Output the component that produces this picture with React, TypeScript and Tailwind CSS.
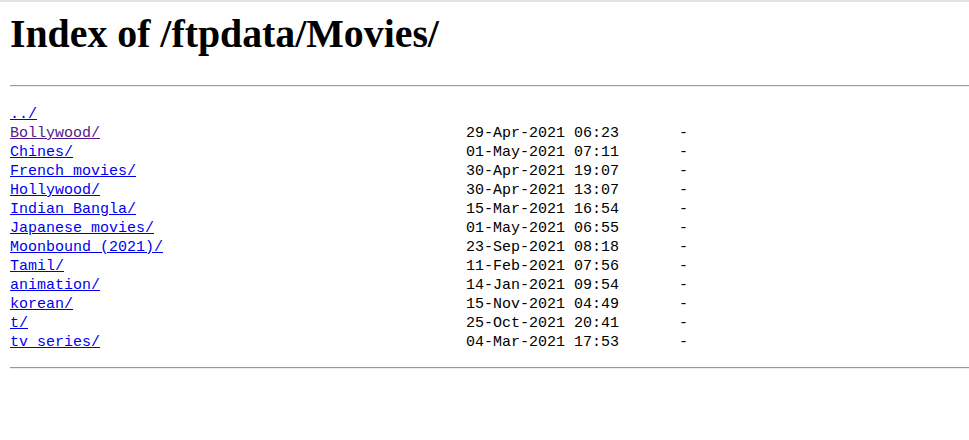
import React from "react";

const rows: { name: string; date: string; visited?: boolean }[] = [
  { name: "Bollywood/", date: "29-Apr-2021 06:23", visited: true },
  { name: "Chines/", date: "01-May-2021 07:11" },
  { name: "French_movies/", date: "30-Apr-2021 19:07" },
  { name: "Hollywood/", date: "30-Apr-2021 13:07" },
  { name: "Indian Bangla/", date: "15-Mar-2021 16:54" },
  { name: "Japanese_movies/", date: "01-May-2021 06:55" },
  { name: "Moonbound (2021)/", date: "23-Sep-2021 08:18" },
  { name: "Tamil/", date: "11-Feb-2021 07:56" },
  { name: "animation/", date: "14-Jan-2021 09:54" },
  { name: "korean/", date: "15-Nov-2021 04:49" },
  { name: "t/", date: "25-Oct-2021 20:41" },
  { name: "tv_series/", date: "04-Mar-2021 17:53" },
];

export default function App() {
  return (
    <div className="min-h-[440px] w-[969px] bg-white text-black">
      <div className="h-[2px] bg-[#e3e3e3]" />
      <h1 className="mt-[9px] pl-[10px] font-['Liberation_Serif',serif] text-[39.8px] font-bold leading-[46px]">
        Index of /ftpdata/Movies/
      </h1>
      <div className="ml-[10px] mt-[28px] h-[2px] border-t border-b border-t-[#9a9a9a] border-b-[#eeeeee]" />
      <div className="mt-[18px] pl-[10px] font-['Liberation_Mono',monospace] text-[15px] leading-[19px] whitespace-pre">
        <div className="flex">
          <a href="#" className="text-[#0000ee] underline">
            ../
          </a>
        </div>
        {rows.map((r) => (
          <div key={r.name} className="flex">
            <span className="w-[456px] shrink-0">
              <a
                href="#"
                className={r.visited ? "text-[#551a8b] underline" : "text-[#0000ee] underline"}
              >
                {r.name}
              </a>
            </span>
            <span className="w-[213px] shrink-0">{r.date}</span>
            <span>-</span>
          </div>
        ))}
      </div>
      <div className="ml-[10px] mt-[15px] h-[2px] border-t border-b border-t-[#9a9a9a] border-b-[#eeeeee]" />
    </div>
  );
}
